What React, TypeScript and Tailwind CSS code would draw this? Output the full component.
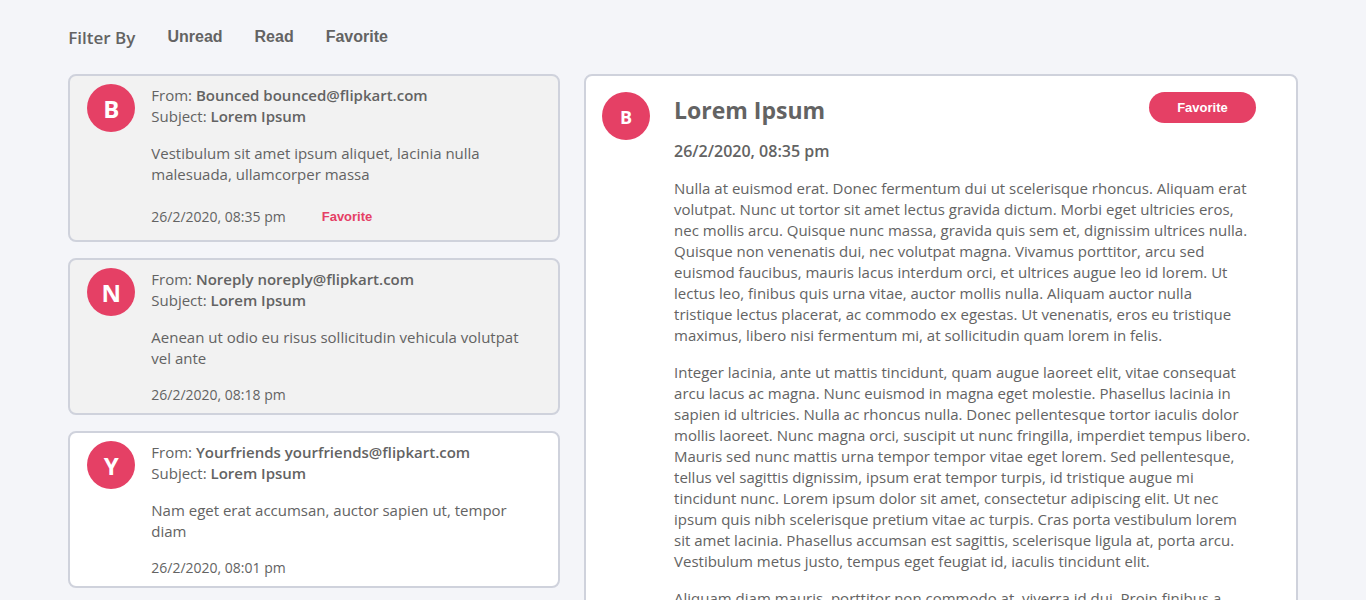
type Email = {
  id: number;
  name: string;
  address: string;
  subject: string;
  summary: string;
  date: string;
  read: boolean;
  favorite: boolean;
};

const emails: Email[] = [
  {
    id: 1,
    name: "Bounced",
    address: "bounced@flipkart.com",
    subject: "Lorem Ipsum",
    summary: "Vestibulum sit amet ipsum aliquet, lacinia nulla malesuada, ullamcorper massa",
    date: "26/2/2020, 08:35 pm",
    read: true,
    favorite: true,
  },
  {
    id: 2,
    name: "Noreply",
    address: "noreply@flipkart.com",
    subject: "Lorem Ipsum",
    summary: "Aenean ut odio eu risus sollicitudin vehicula volutpat vel ante",
    date: "26/2/2020, 08:18 pm",
    read: true,
    favorite: false,
  },
  {
    id: 3,
    name: "Yourfriends",
    address: "yourfriends@flipkart.com",
    subject: "Lorem Ipsum",
    summary: "Nam eget erat accumsan, auctor sapien ut, tempor diam",
    date: "26/2/2020, 08:01 pm",
    read: false,
    favorite: false,
  },
];

const paragraphs = [
  "Nulla at euismod erat. Donec fermentum dui ut scelerisque rhoncus. Aliquam erat volutpat. Nunc ut tortor sit amet lectus gravida dictum. Morbi eget ultricies eros, nec mollis arcu. Quisque nunc massa, gravida quis sem et, dignissim ultrices nulla. Quisque non venenatis dui, nec volutpat magna. Vivamus porttitor, arcu sed euismod faucibus, mauris lacus interdum orci, et ultrices augue leo id lorem. Ut lectus leo, finibus quis urna vitae, auctor mollis nulla. Aliquam auctor nulla tristique lectus placerat, ac commodo ex egestas. Ut venenatis, eros eu tristique maximus, libero nisi fermentum mi, at sollicitudin quam lorem in felis.",
  "Integer lacinia, ante ut mattis tincidunt, quam augue laoreet elit, vitae consequat arcu lacus ac magna. Nunc euismod in magna eget molestie. Phasellus lacinia in sapien id ultricies. Nulla ac rhoncus nulla. Donec pellentesque tortor iaculis dolor mollis laoreet. Nunc magna orci, suscipit ut nunc fringilla, imperdiet tempus libero. Mauris sed nunc mattis urna tempor tempor vitae eget lorem. Sed pellentesque, tellus vel sagittis dignissim, ipsum erat tempor turpis, id tristique augue mi tincidunt nunc. Lorem ipsum dolor sit amet, consectetur adipiscing elit. Ut nec ipsum quis nibh scelerisque pretium vitae ac turpis. Cras porta vestibulum lorem sit amet lacinia. Phasellus accumsan est sagittis, scelerisque ligula at, porta arcu. Vestibulum metus justo, tempus eget feugiat id, iaculis tincidunt elit.",
  "Aliquam diam mauris, porttitor non commodo at, viverra id dui. Proin finibus a",
];

function Avatar({ name, size }: { name: string; size: "text-2xl" | "text-lg" }) {
  return (
    <div
      className={`flex size-12 shrink-0 items-center justify-center rounded-full bg-[#e54065] pt-[2px] font-bold text-white ${size}`}
    >
      {name[0]}
    </div>
  );
}

function EmailCard({ email }: { email: Email }) {
  return (
    <li
      className={`flex gap-4 rounded-lg border-2 border-[#cfd2dc] px-[17px] py-2 ${
        email.read ? "bg-[#f2f2f2]" : "bg-white"
      }`}
    >
      <Avatar name={email.name} size="text-2xl" />
      <div className="min-w-0 flex-1 pt-px">
        <p>
          From: <strong className="font-semibold">{email.name} {email.address}</strong>
        </p>
        <p>
          Subject: <strong className="font-semibold">{email.subject}</strong>
        </p>
        <p className="my-4">{email.summary}</p>
        <div className="flex items-center gap-9 text-[14px] leading-5">
          <time>{email.date}</time>
          {email.favorite && (
            <button type="button" className="py-[6px] font-['Liberation_Sans',sans-serif] text-[13px] leading-[19px] font-bold text-[#e54065]">
              Favorite
            </button>
          )}
        </div>
      </div>
    </li>
  );
}

export default function App() {
  return (
    <div className="min-h-screen bg-[#f4f5f9] px-[5%] pt-6 font-['Open_Sans','Noto_Sans',sans-serif] text-[15px] leading-[21px] text-[#636363]">
      <header className="flex items-center gap-8">
        <h2 className="pt-[2px] pb-1 text-[17px] leading-6 font-semibold">Filter By</h2>
        <nav className="flex gap-8 pb-1 font-['Liberation_Sans',sans-serif] text-base font-bold">
          <button type="button">Unread</button>
          <button type="button">Read</button>
          <button type="button">Favorite</button>
        </nav>
      </header>
      <main className="mt-5 flex items-start gap-6">
        <ul className="flex w-[40%] shrink-0 flex-col gap-4">
          {emails.map((email) => (
            <EmailCard key={email.id} email={email} />
          ))}
        </ul>
        <article className="flex min-w-0 flex-1 gap-6 rounded-lg border-2 border-[#cfd2dc] bg-white py-4 pr-10 pl-4">
          <Avatar name={emails[0].name} size="text-lg" />
          <div className="min-w-0 flex-1">
            <div className="flex items-start justify-between">
              <h1 className="text-[23px] leading-9 font-bold">Lorem Ipsum</h1>
              <button
                type="button"
                className="rounded-full bg-[#e54065] px-7 py-[6px] font-['Liberation_Sans',sans-serif] text-[13px] leading-[19px] font-bold text-white"
              >
                Favorite
              </button>
            </div>
            <time className="mt-[13px] block text-base leading-[21px] font-semibold">{emails[0].date}</time>
            {paragraphs.map((text) => (
              <p key={text} className="mt-4 pr-[3px]">
                {text}
              </p>
            ))}
          </div>
        </article>
      </main>
    </div>
  );
}
